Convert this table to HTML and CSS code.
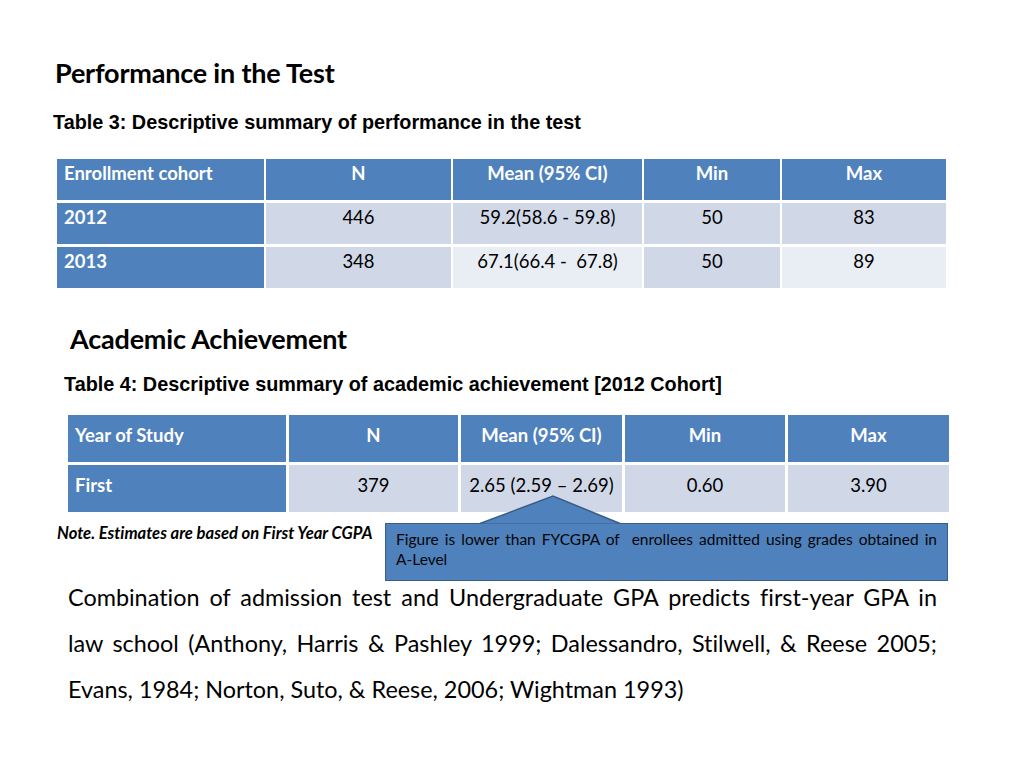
FILE: index.html
```html
<!DOCTYPE html>
<html lang="en">
<head>
<meta charset="utf-8">
<title>Performance in the Test</title>
<link rel="stylesheet" href="styles.css">
</head>
<body>
<main class="slide">
  <h1 class="title title-1">Performance in the Test</h1>
  <p class="caption caption-3">Table 3: Descriptive summary of performance in the test</p>
  <div class="grid grid-3">
    <div class="cell head left">Enrollment cohort</div>
    <div class="cell head">N</div>
    <div class="cell head">Mean (95% CI)</div>
    <div class="cell head">Min</div>
    <div class="cell head">Max</div>

    <div class="cell stub left">2012</div>
    <div class="cell dark">446</div>
    <div class="cell dark">59.2(58.6 - 59.8)</div>
    <div class="cell dark">50</div>
    <div class="cell dark">83</div>

    <div class="cell stub left">2013</div>
    <div class="cell dark">348</div>
    <div class="cell light">67.1(66.4 -&nbsp; 67.8)</div>
    <div class="cell dark">50</div>
    <div class="cell light">89</div>
  </div>

  <h2 class="title title-2">Academic Achievement</h2>
  <p class="caption caption-4">Table 4: Descriptive summary of academic achievement [2012 Cohort]</p>
  <div class="grid grid-4">
    <div class="cell head left">Year of Study</div>
    <div class="cell head">N</div>
    <div class="cell head">Mean (95% CI)</div>
    <div class="cell head">Min</div>
    <div class="cell head">Max</div>

    <div class="cell stub left">First</div>
    <div class="cell dark">379</div>
    <div class="cell dark">2.65 (2.59 – 2.69)</div>
    <div class="cell dark">0.60</div>
    <div class="cell dark">3.90</div>
  </div>

  <div class="note-row">
    <p class="note">Note. Estimates are based on First Year CGPA</p>
    <div class="callout">
      <svg class="callout-pointer" width="142" height="30" viewBox="0 0 142 30" aria-hidden="true">
        <polygon points="0,28.5 73,1 140,28.5" fill="#4f81bd"/>
        <polyline points="0,28.5 73,1 140,28.5" fill="none" stroke="#385d8a" stroke-width="1.5"/>
      </svg>
      <p class="callout-text">Figure is lower than FYCGPA of&nbsp; enrollees admitted using grades obtained in <span class="nowrap">A-Level</span></p>
    </div>
  </div>

  <p class="body-text">Combination of admission test and Undergraduate GPA predicts first-year GPA in law school (Anthony, Harris &amp; Pashley 1999; Dalessandro, Stilwell, &amp; Reese 2005; Evans, 1984; Norton, Suto, &amp; Reese, 2006; Wightman 1993)</p>
</main>
</body>
</html>
```

FILE: styles.css
```css
* { box-sizing: border-box; }

html, body {
  margin: 0;
  padding: 0;
  background: #ffffff;
}

.slide {
  width: 1024px;
  height: 768px;
  position: relative;
  overflow: hidden;
  font-family: Lato, "Open Sans", sans-serif;
  font-variant-ligatures: none;
  color: #000;
  padding-top: 58px;
}

.title {
  margin: 0;
  font-weight: 700;
  font-size: 27px;
  line-height: 30px;
  letter-spacing: -0.2px;
}

.title-1 { margin-left: 55px; }
.title-2 { margin-left: 70px; margin-top: 36px; }

.caption {
  margin: 0;
  font-family: "Liberation Sans", Arial, sans-serif;
  font-weight: 700;
  font-size: 21px;
  line-height: 22px;
  transform-origin: left center;
  transform: scaleX(0.943);
  white-space: nowrap;
}

.caption-3 { margin-left: 53px; margin-top: 23px; }
.caption-4 { margin-left: 64px; margin-top: 19px; }

.grid {
  display: grid;
  column-gap: 2px;
  row-gap: 3px;
  font-size: 18.5px;
  line-height: 22px;
}

.grid-3 {
  margin-left: 57px;
  margin-top: 26px;
  grid-template-columns: 207px 185px 189px 136px 164px;
  grid-auto-rows: 41px;
}

.grid-3 .cell { padding-top: 3px; }

.grid-4 {
  margin-left: 68px;
  margin-top: 20px;
  grid-template-columns: 218px 169px 161px 160px 161px;
  grid-auto-rows: 47px;
  row-gap: 3px;
  column-gap: 3px;
}

.grid-4 .cell { padding-top: 9px; }

.cell {
  text-align: center;
  color: #000;
}

.cell.left {
  text-align: left;
  padding-left: 7px;
}

.head {
  background: #4f81bd;
  color: #fff;
  font-weight: 700;
}

.stub {
  background: #4f81bd;
  color: #fff;
  font-weight: 700;
}

.dark { background: #d0d8e8; }
.light { background: #e9edf4; }

.note-row {
  display: flex;
  align-items: flex-start;
  margin-top: 11px;
}

.note {
  margin: 0;
  margin-left: 57px;
  margin-top: 0;
  font-style: italic;
  font-weight: 700;
  font-size: 16.6px;
  line-height: 20px;
  width: 328px;
  white-space: nowrap;
}

.callout {
  position: relative;
  width: 563px;
  height: 58px;
  background: #4f81bd;
  border: 1.5px solid #385d8a;
  padding: 5px 10px 0 10px;
}

.callout-pointer {
  position: absolute;
  left: 94px;
  top: -29px;
  overflow: visible;
}

.callout-text {
  margin: 0;
  font-size: 15.5px;
  line-height: 20px;
  text-align: justify;
  color: #050505;
}

.nowrap { white-space: nowrap; }

.body-text {
  margin: 0;
  margin-left: 68px;
  width: 869px;
  margin-top: -7px;
  font-size: 23.4px;
  line-height: 46px;
  text-align: justify;
}
```
